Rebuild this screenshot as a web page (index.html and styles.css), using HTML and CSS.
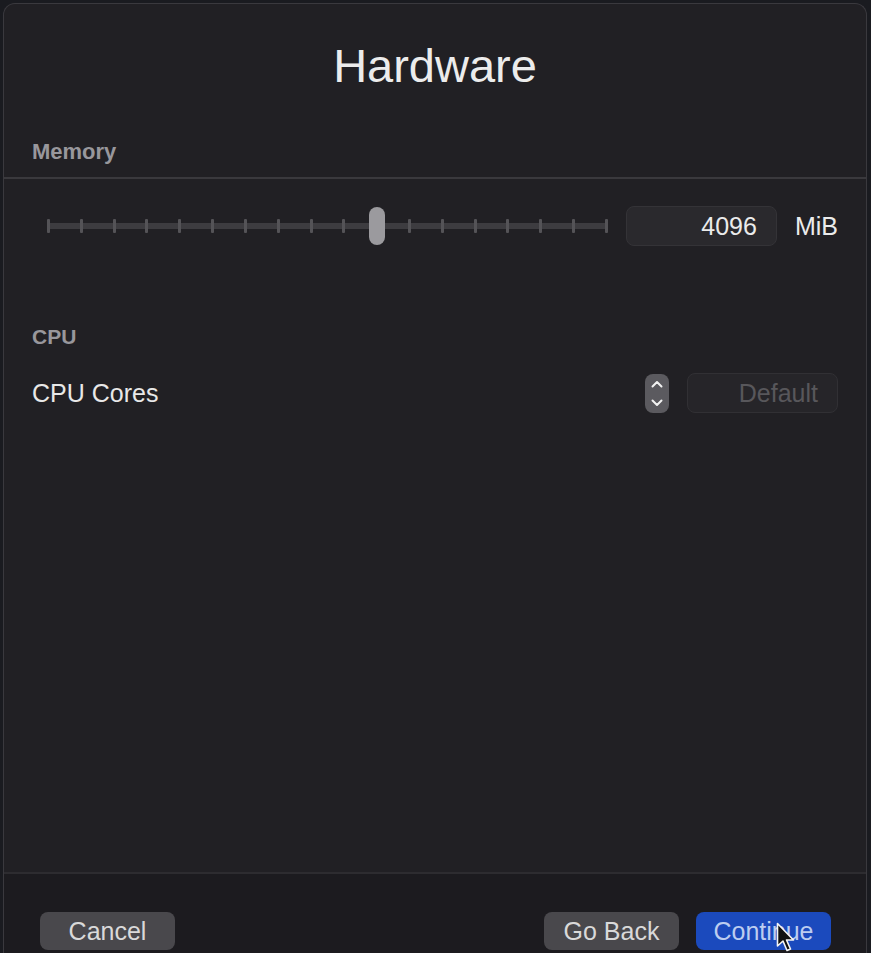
FILE: index.html
```html
<!DOCTYPE html>
<html lang="en">
<head>
<meta charset="utf-8">
<title>Hardware</title>
<link rel="stylesheet" href="styles.css">
</head>
<body>
<div class="window">
  <div class="content">
    <h1 class="title">Hardware</h1>
    <div class="section-label memory-label">Memory</div>
    <div class="separator"></div>
    <div class="memory-row">
      <div class="slider">
        <div class="track"></div>
        <div class="ticks">
          <span></span><span></span><span></span><span></span><span></span><span></span>
          <span></span><span></span><span></span><span></span><span></span><span></span>
          <span></span><span></span><span></span><span></span><span></span><span></span>
        </div>
        <div class="knob" style="left: calc(58.8% - 8px);"></div>
      </div>
      <div class="field value">4096</div>
      <div class="unit">MiB</div>
    </div>
    <div class="section-label cpu-label">CPU</div>
    <div class="cpu-row">
      <div class="row-label">CPU Cores</div>
      <div class="stepper">
        <svg width="24" height="39" viewBox="0 0 24 39">
          <path d="M7.5 12.5 L12 8 L16.5 12.5" fill="none" stroke="#f2f2f2" stroke-width="2" stroke-linecap="round" stroke-linejoin="round"/>
          <path d="M7.5 26.5 L12 31 L16.5 26.5" fill="none" stroke="#f2f2f2" stroke-width="2" stroke-linecap="round" stroke-linejoin="round"/>
        </svg>
      </div>
      <div class="field placeholder">Default</div>
    </div>
  </div>
  <div class="footer">
    <button class="btn">Cancel</button>
    <div class="spacer"></div>
    <button class="btn">Go Back</button>
    <button class="btn primary">Continue</button>
  </div>
  <svg class="cursor" width="20" height="32" viewBox="0 0 20 32">
    <path d="M1.5 1.5 L1.5 24 L7 19 L11 28.5 L14.5 27 L10.5 18 L17.5 18 Z" fill="#111" stroke="#f4f4f4" stroke-width="1.6" stroke-linejoin="round"/>
  </svg>
</div>
</body>
</html>
```

FILE: styles.css
```css
* { box-sizing: border-box; }

html, body {
  margin: 0;
  padding: 0;
  background: #1a1b20;
  width: 871px;
  height: 953px;
  overflow: hidden;
  font-family: "Liberation Sans", Arial, sans-serif;
}

.window {
  position: relative;
  margin: 3px 4px 0 3px;
  height: 950px;
  background: #212024;
  border: 1px solid #3a393e;
  border-bottom: none;
  border-radius: 12px 12px 0 0;
  display: flex;
  flex-direction: column;
}

.content {
  flex: 1;
  display: flex;
  flex-direction: column;
}

.title {
  margin: 35px 0 0 0;
  text-align: center;
  font-weight: normal;
  font-size: 47px;
  line-height: 54px;
  color: #ececec;
}

.section-label {
  font-weight: bold;
  color: #98979c;
  padding-left: 28px;
}

.memory-label {
  margin-top: 46px;
  font-size: 22px;
  line-height: 25px;
}

.separator {
  margin-top: 13px;
  height: 2px;
  background: #3a393d;
}

.memory-row {
  margin-top: 27px;
  display: flex;
  align-items: center;
  height: 40px;
  padding: 0 28px 0 43px;
  gap: 18px;
}

.slider {
  position: relative;
  flex: 1;
  height: 40px;
}

.track {
  position: absolute;
  left: 0;
  right: 0;
  top: 17px;
  height: 6px;
  background: #3d3c40;
  border-radius: 2px;
}

.ticks {
  position: absolute;
  left: 0;
  right: 0;
  top: 13px;
  height: 14px;
  display: flex;
  justify-content: space-between;
}

.ticks span {
  width: 3px;
  height: 14px;
  background: #545357;
  border-radius: 1px;
}

.knob {
  position: absolute;
  top: 1px;
  width: 16px;
  height: 38px;
  border-radius: 8px;
  background: #9b9a9e;
}

.field {
  width: 151px;
  height: 40px;
  border-radius: 8px;
  background: #2a292d;
  border: 1px solid #343337;
  text-align: right;
  padding-right: 19px;
  font-size: 25px;
  line-height: 38px;
}

.value {
  color: #ebebeb;
}

.unit {
  font-size: 25px;
  color: #ebebeb;
}

.cpu-label {
  margin-top: 79px;
  font-size: 21px;
  line-height: 24px;
}

.cpu-row {
  margin-top: 24px;
  display: flex;
  align-items: center;
  height: 40px;
  padding: 0 28px 0 28px;
  gap: 18px;
}

.row-label {
  flex: 1;
  font-size: 25px;
  color: #e8e8e8;
}

.stepper {
  width: 24px;
  height: 39px;
  border-radius: 8px;
  background: #5b5a5f;
  display: flex;
}

.placeholder {
  background: #262529;
  border-color: #313034;
  color: #58575b;
}

.footer {
  height: 81px;
  border-top: 2px solid #2d2c30;
  background: #1c1b1f;
  display: flex;
  align-items: flex-start;
  padding: 38px 35px 0 36px;
  gap: 17px;
}

.spacer {
  flex: 1;
}

.btn {
  width: 135px;
  height: 38px;
  border: none;
  border-radius: 8px;
  background: #49484c;
  color: #d9d9d9;
  font-family: "Liberation Sans", Arial, sans-serif;
  font-size: 25px;
  line-height: 38px;
  padding: 0;
}

.btn.primary {
  background: #1b4abd;
  color: #bccdf0;
}

.cursor {
  position: absolute;
  left: 772px;
  top: 918px;
}
```
